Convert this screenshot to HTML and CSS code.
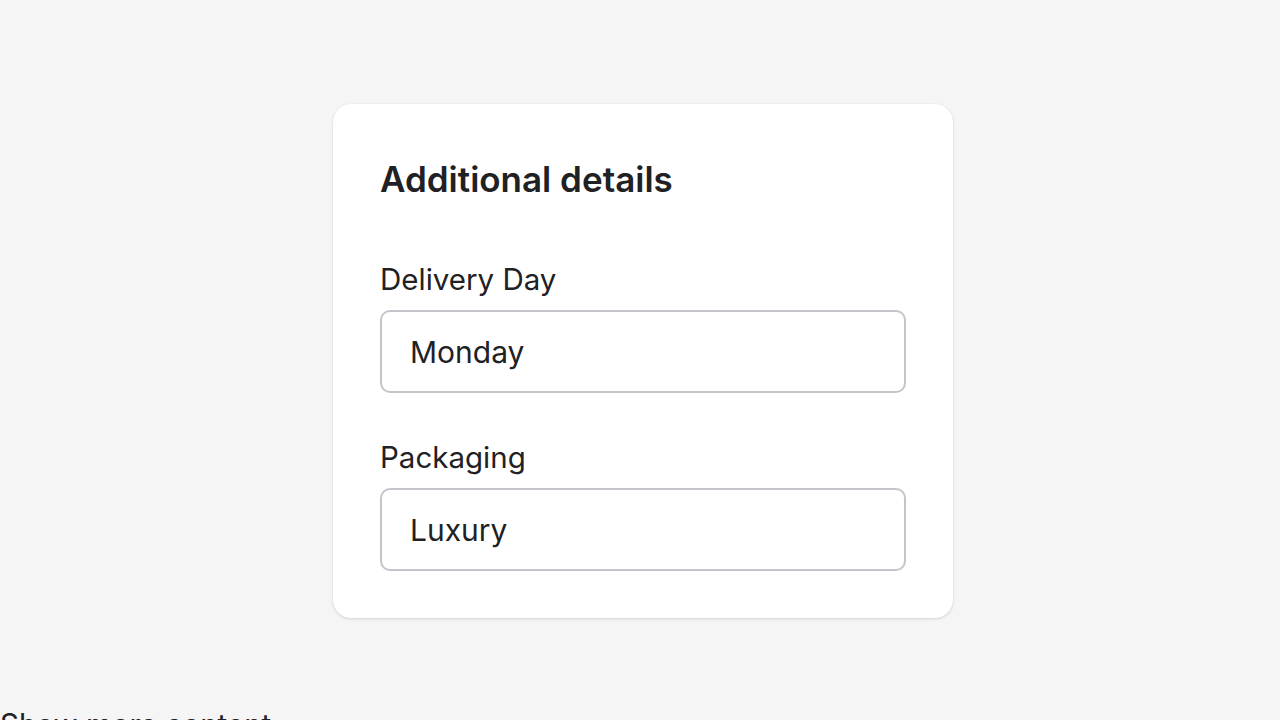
FILE: index.html
```html
<!DOCTYPE html>
<html>
<head>
<meta charset="utf-8">
<link rel="stylesheet" href="styles.css">
</head>
<body>
<main class="stage">
  <section class="card">
    <h2 class="card-title">Additional details</h2>
    <div class="field">
      <label class="field-label">Delivery Day</label>
      <div class="field-input">Monday</div>
    </div>
    <div class="field">
      <label class="field-label">Packaging</label>
      <div class="field-input">Luxury</div>
    </div>
  </section>
</main>
<p class="footer-text">Show more content</p>
</body>
</html>
```
FILE: styles.css
```css
html, body {
  margin: 0;
  padding: 0;
  background: #f5f5f5;
  font-family: Inter, "Noto Sans", sans-serif;
  color: #1f2124;
  overflow: hidden;
}
.stage {
  padding-top: 104px;
  padding-left: 6px;
}
.card {
  width: 620px;
  margin: 0 auto;
  box-sizing: border-box;
  background: #fff;
  border-radius: 18px;
  box-shadow: 0 1px 3px rgba(0,0,0,0.14), 0 0 1px rgba(0,0,0,0.08);
  padding: 53px 47px 47px;
}
.card-title {
  margin: 0;
  font-size: 35px;
  line-height: 44px;
  font-weight: 600;
}
.field {
  display: flex;
  flex-direction: column;
  gap: 14px;
}
.card-title + .field {
  margin-top: 61px;
}
.field + .field {
  margin-top: 47px;
}
.field-label {
  font-size: 29.5px;
  line-height: 34px;
}
.field-input {
  height: 83px;
  box-sizing: border-box;
  border: 2px solid #c2c6ca;
  border-radius: 10px;
  padding: 0 28px;
  display: flex;
  align-items: center;
  font-size: 30px;
}
.footer-text {
  margin: 89px 0 0;
  font-size: 29.5px;
  line-height: 34px;
}
```
